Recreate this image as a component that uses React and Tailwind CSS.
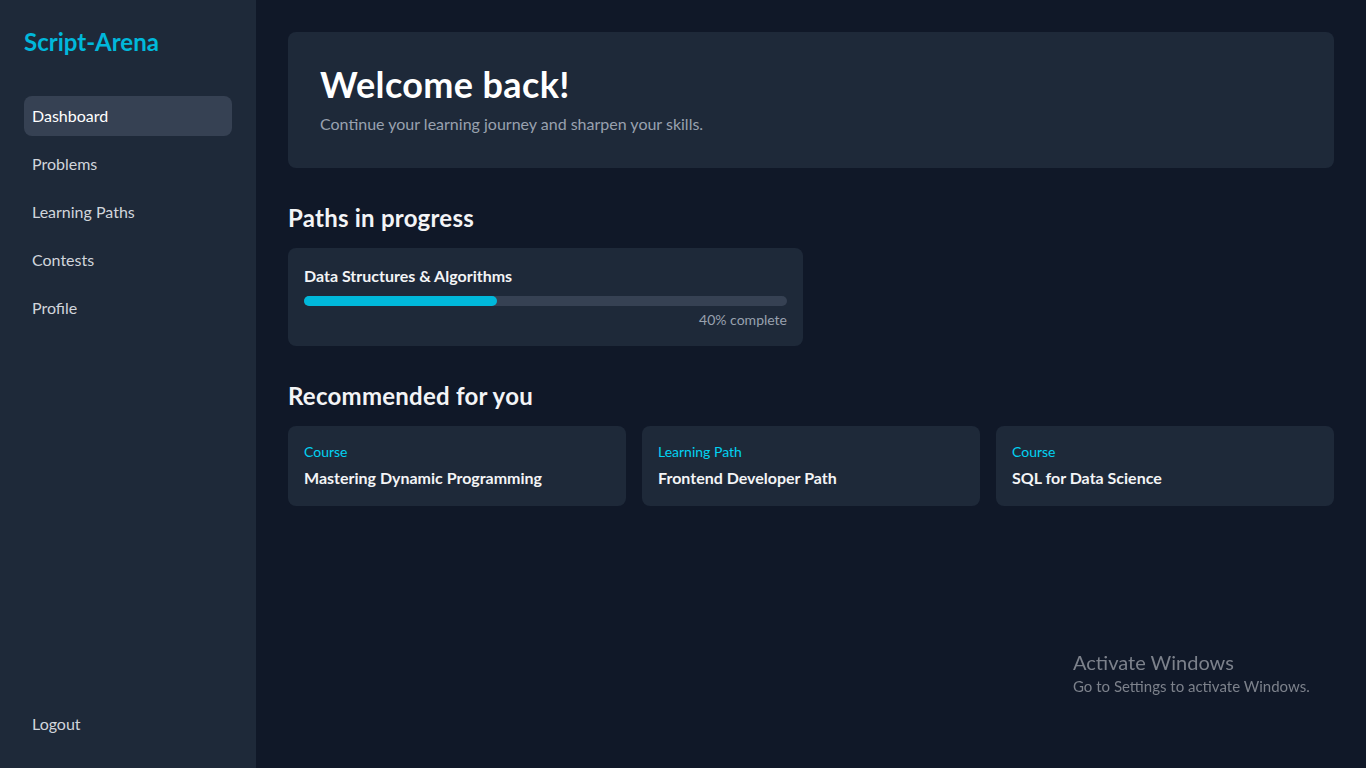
import React from "react";

const navItems = ["Dashboard", "Problems", "Learning Paths", "Contests", "Profile"];

const recommended = [
  { type: "Course", title: "Mastering Dynamic Programming" },
  { type: "Learning Path", title: "Frontend Developer Path" },
  { type: "Course", title: "SQL for Data Science" },
];

const Sidebar = () => (
  <aside className="w-64 shrink-0 bg-gray-800 p-6 flex flex-col">
    <h1 className="text-2xl font-bold text-cyan-500 pt-0.5">Script-Arena</h1>
    <nav className="mt-[38px] flex flex-col gap-2">
      {navItems.map((item, i) => (
        <a
          key={item}
          href="#"
          className={
            i === 0
              ? "block px-2 py-2 rounded-lg bg-gray-700 text-white"
              : "block px-2 py-2 rounded-lg text-gray-300"
          }
        >
          {item}
        </a>
      ))}
    </nav>
    <div className="mt-auto">
      <a href="#" className="block px-2 py-2 text-gray-300">Logout</a>
    </div>
  </aside>
);

const App = () => {
  const progress = 40;
  return (
    <div
      className="flex min-h-screen bg-gray-900 text-white"
      style={{ fontFamily: '"Segoe UI", Lato, "Noto Sans", sans-serif' }}
    >
      <Sidebar />
      <main className="flex-1 p-8">
        {/* welcome banner */}
        <div className="bg-gray-800 rounded-lg p-8">
          <h2 className="text-4xl font-bold tracking-[0.01em]">Welcome back!</h2>
          <p className="mt-2 text-gray-400">Continue your learning journey and sharpen your skills.</p>
        </div>

        {/* paths in progress */}
        <section className="mt-8">
          <h3 className="text-2xl font-bold text-gray-100 mb-4 pt-0.5 tracking-[0.01em]">Paths in progress</h3>
          <div className="grid grid-cols-2 gap-4 -mt-0.5">
            <div className="bg-gray-800 rounded-lg p-4">
              <p className="font-bold text-gray-100">Data Structures &amp; Algorithms</p>
              <div className="mt-2 h-2.5 w-full rounded-full bg-gray-700">
                <div className="h-2.5 rounded-full bg-cyan-500" style={{ width: `${progress}%` }} />
              </div>
              <p className="mt-1 text-right text-sm text-gray-400">{progress}% complete</p>
            </div>
          </div>
        </section>

        {/* recommended */}
        <section className="mt-8">
          <h3 className="text-2xl font-bold text-gray-100 mb-4 pt-0.5 tracking-[0.01em]">Recommended for you</h3>
          <div className="grid grid-cols-3 gap-4 -mt-0.5">
            {recommended.map((r) => (
              <div key={r.title} className="bg-gray-800 rounded-lg p-4">
                <p className="text-sm text-cyan-400">{r.type}</p>
                <p className="mt-1 font-bold text-gray-100">{r.title}</p>
              </div>
            ))}
          </div>
        </section>
      </main>

      {/* os watermark */}
      <div className="fixed left-[1073px] top-[650px] text-[#7c818b] pointer-events-none">
        <p className="text-xl leading-6">Activate Windows</p>
        <p className="text-[15px] leading-5 mt-0.5">Go to Settings to activate Windows.</p>
      </div>
    </div>
  );
};

export default App;
